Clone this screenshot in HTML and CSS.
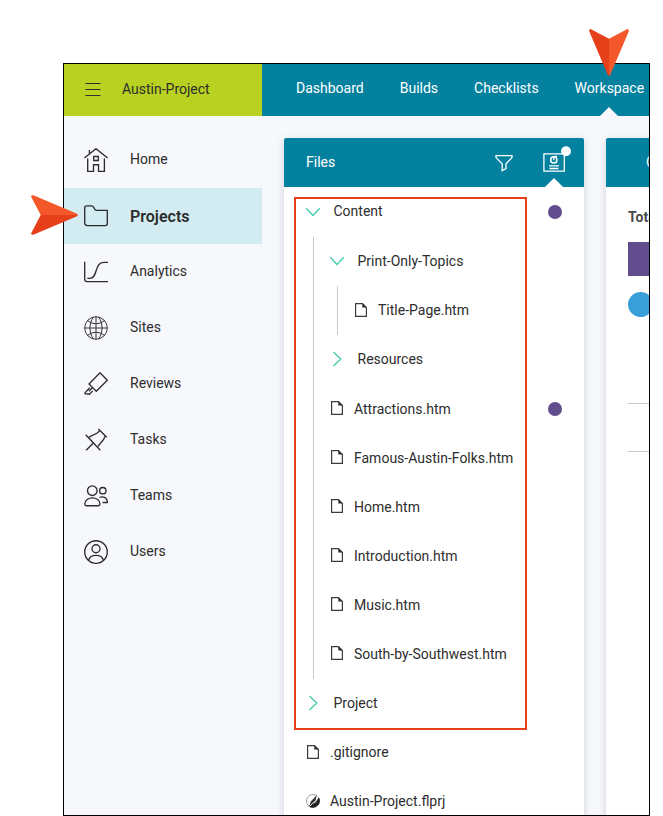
FILE: index.html
```html
<!DOCTYPE html>
<html lang="en">
<head>
<meta charset="utf-8">
<title>Austin-Project</title>
<link rel="stylesheet" href="styles.css">
</head>
<body>
<svg width="0" height="0" class="defs">
  <symbol id="file" viewBox="0 0 14 16"><path d="M1.6 1.7H8.5L12.4 5.5V14.3H1.6Z" fill="none" stroke="#3c3c3c" stroke-width="1.2"/><path d="M8.3 1.3V5.6H12.8Z" fill="#2d2d2d"/></symbol>
  <symbol id="down" viewBox="0 0 14 16"><path d="M.3 4.3L7 11.5L13.7 4.3" fill="none" stroke="#43cbaa" stroke-width="1.3"/></symbol>
  <symbol id="right" viewBox="0 0 14 16"><path d="M3.5 1L10.8 8L3.5 15" fill="none" stroke="#43cbaa" stroke-width="1.3"/></symbol>
</svg>
<div class="app">
  <header class="topbar">
    <div class="brand">
      <svg class="burger" width="16" height="14" viewBox="0 0 16 14"><path d="M.5 .5H15.5M.5 6.5H15.5M.5 12.5H15.5" stroke="#2d2d2d"/></svg>
      <span>Austin-Project</span>
    </div>
    <nav class="tabs">
      <span>Dashboard</span><span>Builds</span><span>Checklists</span><span class="current">Workspace</span>
    </nav>
  </header>
  <div class="body">
    <nav class="side">
      <div class="item"><svg viewBox="0 0 24 24"><path d="M.4 10L12 .7L23.6 10M5.4 5.8V2M3.7 10.5V23.3H9.5V16.7H14.5V23.3H20.4V10.5M9.7 8.5H14.3V12.5H9.7Z"/></svg><span>Home</span></div>
      <div class="item active"><svg viewBox="0 0 24 24"><path d="M.7 4Q.7 1.9 2.7 1.9H7.6Q9 1.9 9.5 3.1L10.3 4.5Q11 6.4 12.6 6.4H23.3V19.6Q23.3 21.6 21.3 21.6H3.4Q.7 21.6 .7 18.8Z"/></svg><span>Projects</span></div>
      <div class="item"><svg viewBox="0 0 24 24"><path d="M.7 1.8V19.3Q.7 21.6 3 21.6H24M3.3 18.4H6C14 18.4 10 2.3 20 2.3H24"/></svg><span>Analytics</span></div>
      <div class="item"><svg class="thin" viewBox="0 0 24 24"><circle cx="12" cy="12" r="11.3"/><path d="M12 .7V23.3M.7 12H23.3M9 1Q2.8 12 9 23M15 1Q21.2 12 15 23M3.4 4.6Q12 11 20.6 4.6M3.4 19.4Q12 13 20.6 19.4"/></svg><span>Sites</span></div>
      <div class="item"><svg viewBox="0 0 24 24"><path d="M16 .8L23.3 8.2L12.3 19.2L5 11.9ZM5.6 15.7L1 20.9V21.6L5.5 22.2L8.7 18.9M8 16L4.9 19.3"/></svg><span>Reviews</span></div>
      <div class="item"><svg viewBox="0 0 24 24"><path d="M14.4 1L22.8 9.3M15.5 2.9L13.2 5L5 9.1M20.8 8.5L19.8 11.2L14 18.2M1.7 6.8L16.3 22.3M9 15.3L2.2 22.3"/></svg><span>Tasks</span></div>
      <div class="item"><svg viewBox="0 0 24 24"><circle cx="8.3" cy="6.7" r="4.8"/><circle cx="18.8" cy="6.7" r="3.2"/><path d="M.8 20.1C.8 11.8 16 11.8 16 20.1Q16 21.7 14.4 21.7H2.4Q.8 21.7 .8 20.1ZM15.5 13.3C20.5 12 23.5 14.5 23.3 18.5H18.5"/></svg><span>Teams</span></div>
      <div class="item"><svg viewBox="0 0 24 24"><circle cx="12" cy="12" r="11.3"/><circle cx="12" cy="8.7" r="4"/><path d="M4.6 20.3C6.5 13.8 17.5 13.8 19.4 20.3"/></svg><span>Users</span></div>
    </nav>
    <main class="main">
      <section class="panel">
        <div class="head">
          <span class="title">Files</span>
          <svg class="funnel" width="18" height="18" viewBox="0 0 18 18"><path d="M1 1.6H17V3.6L11 9.8V14.6L7.2 16.6V9.8L1 3.6Z"/></svg>
          <span class="report">
            <svg width="28" height="28" viewBox="0 0 28 28"><path d="M1.9 8.9H22.3V26.1H1.9ZM7 20.9H17M7.5 23.5H16.5"/><circle cx="11.8" cy="14.9" r="3.1" stroke-width="1.5"/><path d="M11.8 15.2V11.9L15 11.1"/><circle cx="24" cy="6.2" r="5" fill="#fff" stroke="none"/></svg>
          </span>
        </div>
        <ul class="tree">
          <li><div class="row folder root"><svg><use href="#down"/></svg><span>Content</span><i class="dot"></i></div>
            <ul>
              <li><div class="row folder"><svg><use href="#down"/></svg><span>Print-Only-Topics</span></div>
                <ul><li><div class="row"><svg><use href="#file"/></svg><span>Title-Page.htm</span></div></li></ul>
              </li>
              <li><div class="row folder"><svg><use href="#right"/></svg><span>Resources</span></div></li>
              <li><div class="row"><svg><use href="#file"/></svg><span>Attractions.htm</span><i class="dot"></i></div></li>
              <li><div class="row"><svg><use href="#file"/></svg><span>Famous-Austin-Folks.htm</span></div></li>
              <li><div class="row"><svg><use href="#file"/></svg><span>Home.htm</span></div></li>
              <li><div class="row"><svg><use href="#file"/></svg><span>Introduction.htm</span></div></li>
              <li><div class="row"><svg><use href="#file"/></svg><span>Music.htm</span></div></li>
              <li><div class="row"><svg><use href="#file"/></svg><span>South-by-Southwest.htm</span></div></li>
            </ul>
          </li>
          <li><div class="row folder"><svg><use href="#right"/></svg><span>Project</span></div></li>
          <li><div class="row"><svg><use href="#file"/></svg><span>.gitignore</span></div></li>
          <li><div class="row"><svg viewBox="0 0 14 16"><circle cx="7" cy="8" r="6.5" fill="none" stroke="#888" stroke-width=".8"/><path d="M13 4.5A7 7 0 0 1 2.5 13.2L6 10.5L8.5 9Z" fill="#222"/><path d="M3.2 13L5 8.2L10.8 2L9.5 7.5L5.5 11Z" fill="#333"/><path d="M3.5 13.5L6.5 10.5L10 8.5L12 3" fill="none" stroke="#fff" stroke-width=".9"/></svg><span>Austin-Project.flprj</span></div></li>
        </ul>
      </section>
      <section class="panel detail">
        <div class="head"><span class="title">C</span></div>
        <div class="info">
          <b>Total</b>
          <div class="bar"></div>
          <div class="avatar"></div>
          <hr><hr>
        </div>
      </section>
    </main>
  </div>
</div>
<div class="highlight"></div>
<svg class="arrow arrow-side" width="47" height="40" viewBox="0 0 47 40"><path d="M0 1.6Q.5 -.5 3 .5L46 18.8L47 20H9.7Z" fill="#f4572a"/><path d="M0 38.4Q.5 40.5 3 39.5L46 21.2L47 20H9.7Z" fill="#e6401b"/></svg>
<svg class="arrow arrow-top" width="40" height="47" viewBox="0 0 40 47"><path d="M1.6 0Q-.5 .5 .5 3L18.8 46L20 47V9.7Z" fill="#e6401b"/><path d="M38.4 0Q40.5 .5 39.5 3L21.2 46L20 47V9.7Z" fill="#f4572a"/></svg>
</body>
</html>
```
FILE: styles.css
```css
* { box-sizing: border-box; }
body {
  margin: 0;
  height: 816px;
  padding: 63px 13px 0 63px;
  overflow: hidden;
  position: relative;
  background: #fff;
  color: #2d2d2d;
  font: 14px/20px Roboto, "Liberation Sans", sans-serif;
}
.defs { position: absolute; }
.app {
  width: 587px;
  height: 753px;
  border: 1px solid #000;
  background: #f7f8fc;
  overflow: hidden;
}
.topbar { display: flex; height: 52px; background: #04819f; }
.brand {
  flex: 0 0 198px;
  display: flex;
  align-items: center;
  gap: 22px;
  padding: 0 0 2px 21px;
  background: #b9d120;
}
.burger { margin-top: 2px; margin-right: -1px; }
.tabs {
  display: flex;
  gap: 36px;
  padding-left: 34px;
  color: #fff;
  line-height: 49px;
}
.current { position: relative; }
.current::after,
.report::after {
  content: "";
  position: absolute;
  left: 50%;
  bottom: 0;
  margin-left: -9px;
  border: 9px solid transparent;
  border-top: 0;
  border-bottom: 9px solid #f7f8fc;
}
.body { display: flex; height: 699px; }
.side { flex: 0 0 198px; padding-top: 16px; }
.item {
  display: flex;
  align-items: center;
  gap: 22px;
  height: 56px;
  padding-left: 20px;
}
.item svg {
  width: 24px;
  height: 24px;
  fill: none;
  stroke: #2d2d2d;
  stroke-width: 1.35;
}
.item .thin { stroke-width: .95; }
.item span { margin-top: -2px; }
.active { background: #d2ecf2; font-size: 16px; font-weight: 600; }
.item.active span { margin-top: 1px; }
.main { display: flex; gap: 22px; padding: 22px 0 0 22px; }
.panel {
  flex: 0 0 300px;
  height: 760px;
  background: #fff;
  border-radius: 2px 2px 0 0;
  box-shadow: 0 2px 8px rgba(40, 45, 70, .18);
}
.head {
  display: flex;
  align-items: center;
  height: 49px;
  padding-left: 22px;
  background: #04819f;
  color: #fff;
  border-radius: 2px 2px 0 0;
}
.title { margin-top: -2px; }
.head svg { fill: none; stroke: #fff; stroke-width: 1.3; }
.funnel { margin-left: auto; margin-right: 29px; }
.report { position: relative; height: 49px; width: 28px; margin-right: 14px; padding-top: 7px; }
.report svg { display: block; overflow: visible; }
.report::after { border-bottom-color: #fff; left: 12px; }
.tree, .tree ul { list-style: none; margin: 0; padding: 0; }
.tree { padding: .6px 0 0 22px; }
.tree ul {
  margin-left: 7px;
  padding-left: 16px;
  border-left: 1px solid #c9c9c9;
}
.row {
  display: flex;
  align-items: center;
  gap: 10px;
  height: 49.1px;
  padding-right: 22px;
}
.row svg { flex: none; width: 14px; height: 16px; margin-top: -1px; }
.folder { gap: 13.5px; }
.root span { margin-top: -2px; }
.dot {
  width: 14px;
  height: 14px;
  margin-left: auto;
  border-radius: 50%;
  background: #614d8d;
}
.detail .head { padding-left: 40px; }
.info { padding: 20px 22px; }
.info b { display: block; font-weight: 700; color: #4a4a4a; }
.bar { height: 34px; margin: 15px 0 16px; background: #614d8d; }
.avatar { width: 25px; height: 25px; margin-bottom: 86px; border-radius: 50%; background: #3a9fd8; }
.info hr { height: 1px; margin: 0 0 47px; border: 0; background: #c9c9c9; }
.highlight {
  position: absolute;
  left: 294px;
  top: 197px;
  width: 233px;
  height: 533px;
  border: 2px solid #e83f1c;
}
.arrow { position: absolute; }
.arrow-side { left: 31px; top: 195px; }
.arrow-top { left: 589px; top: 28.5px; }
```
